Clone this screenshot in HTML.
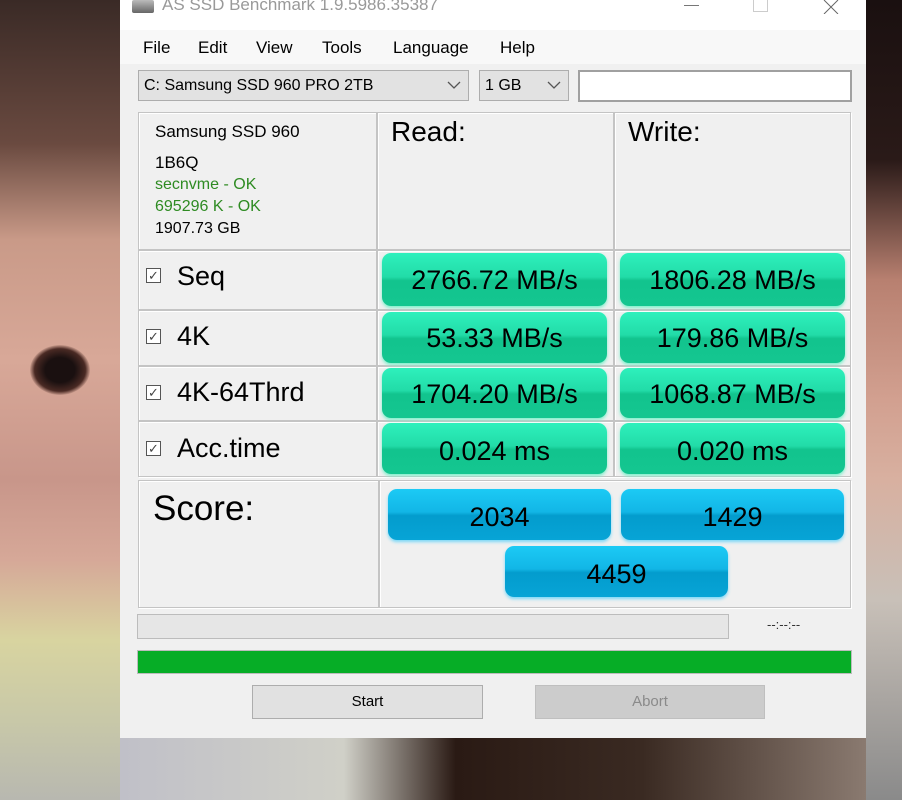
<!DOCTYPE html>
<html><head><meta charset="utf-8"><style>
*{margin:0;padding:0;box-sizing:border-box}
body{width:902px;height:800px;overflow:hidden;position:relative;font-family:"Liberation Sans",Arial,sans-serif;background:#b98c80}
.a{position:absolute}
.cell{position:absolute;border:1px solid #c4c4c4;box-shadow:inset 1px 1px 0 #fff,1px 1px 0 #fff;background:#f0f0f0}
.g{position:absolute;border-radius:9px;background:linear-gradient(#2ef0bc 0%,#22dca8 45%,#12c48e 52%,#14c690 100%);box-shadow:0 2px 3px #7ef0cc;font-size:27px;color:#000;text-align:center;line-height:54px}
.b{position:absolute;border-radius:9px;background:linear-gradient(#1ccaf5 0%,#12b6e6 45%,#039ccd 52%,#07a4d6 100%);box-shadow:0 2px 3px #7ad8f8;font-size:27px;color:#000;text-align:center;line-height:56px}
.lbl{position:absolute;font-size:27px;color:#000}
.cb{position:absolute;width:15px;height:15px;border:1px solid #555;background:#fff;font-size:13px;line-height:13px;text-align:center;color:#444}
.menu span{position:absolute;top:38px;font-size:17px;color:#000}
</style></head><body>
<!-- background photo approximation -->
<div class="a" style="left:0;top:0;width:120px;height:800px;background:linear-gradient(180deg,#3a2a26 0%,#6a4a40 18%,#c99a88 30%,#d8a898 45%,#c8968a 60%,#d6a898 70%,#d8d4a0 80%,#c8c8a8 90%,#b8b8b0 100%)"></div>
<div class="a" style="left:30px;top:345px;width:60px;height:50px;border-radius:50%;background:radial-gradient(#1a1010 35%,#4a2a24 60%,rgba(200,150,130,0) 72%)"></div>
<div class="a" style="left:866px;top:0;width:36px;height:800px;background:linear-gradient(180deg,#1a1010 0%,#2a1a18 20%,#b88070 35%,#d2a090 50%,#d8b0a0 60%,#c8c0b8 75%,#8a8a8a 100%)"></div>
<div class="a" style="left:120px;top:738px;width:746px;height:62px;background:linear-gradient(90deg,#c0c0c8 0%,#d0d0c8 30%,#2a1a14 45%,#3a2a22 70%,#8a7a70 100%)"></div>
<!-- window -->
<div class="a" style="left:120px;top:0;width:746px;height:738px;background:#f0f0f0"></div>
<div class="a" style="left:120px;top:0;width:746px;height:30px;background:#fff"></div>
<div class="a" style="left:132px;top:0;width:22px;height:13px;background:linear-gradient(#bbb,#666);border-radius:2px"></div>
<div class="a" style="left:162px;top:-5px;font-size:17px;color:#999">AS SSD Benchmark 1.9.5986.35387</div>
<div class="a" style="left:684px;top:5px;width:15px;height:1px;background:#777"></div>
<div class="a" style="left:753px;top:0;width:15px;height:12px;border:1px solid #ccc;border-top:none"></div>
<svg class="a" style="left:822px;top:0" width="18" height="14"><path d="M2 0L16 14M16 0L2 14" stroke="#666" stroke-width="1"/></svg>
<div class="a" style="left:120px;top:30px;width:746px;height:34px;background:#f8f8f8"></div>
<div class="menu"><span style="left:143px">File</span><span style="left:198px">Edit</span><span style="left:256px">View</span><span style="left:322px">Tools</span><span style="left:393px">Language</span><span style="left:500px">Help</span></div>
<!-- combos -->
<div class="a" style="left:138px;top:70px;width:331px;height:31px;background:#e2e2e2;border:1px solid #adadad;font-size:16px;padding:6px 0 0 5px">C: Samsung SSD 960 PRO 2TB</div>
<svg class="a" style="left:447px;top:80px" width="14" height="10"><path d="M1 2L7 8L13 2" fill="none" stroke="#555" stroke-width="1.3"/></svg>
<div class="a" style="left:479px;top:70px;width:90px;height:31px;background:#e2e2e2;border:1px solid #adadad;font-size:16px;padding:6px 0 0 5px">1 GB</div>
<svg class="a" style="left:547px;top:80px" width="14" height="10"><path d="M1 2L7 8L13 2" fill="none" stroke="#555" stroke-width="1.3"/></svg>
<div class="a" style="left:578px;top:70px;width:274px;height:32px;background:#fff;border:2px solid #a0a0a0"></div>
<!-- table -->
<div class="cell" style="left:138px;top:112px;width:239px;height:138px"></div>
<div class="cell" style="left:377px;top:112px;width:237px;height:138px"></div>
<div class="cell" style="left:614px;top:112px;width:237px;height:138px"></div>
<div class="a" style="left:155px;top:122px;font-size:17px">Samsung SSD 960</div>
<div class="a" style="left:155px;top:153px;font-size:17px">1B6Q</div>
<div class="a" style="left:155px;top:176px;font-size:16px;color:#2e8b22">secnvme - OK</div>
<div class="a" style="left:155px;top:198px;font-size:16px;color:#2e8b22">695296 K - OK</div>
<div class="a" style="left:155px;top:220px;font-size:16px">1907.73 GB</div>
<div class="a" style="left:391px;top:116px;font-size:28px">Read:</div>
<div class="a" style="left:628px;top:116px;font-size:28px">Write:</div>

<div class="cell" style="left:138px;top:250px;width:239px;height:60px"></div>
<div class="cell" style="left:377px;top:250px;width:237px;height:60px"></div>
<div class="cell" style="left:614px;top:250px;width:237px;height:60px"></div>
<div class="cell" style="left:138px;top:310px;width:239px;height:56px"></div>
<div class="cell" style="left:377px;top:310px;width:237px;height:56px"></div>
<div class="cell" style="left:614px;top:310px;width:237px;height:56px"></div>
<div class="cell" style="left:138px;top:366px;width:239px;height:55px"></div>
<div class="cell" style="left:377px;top:366px;width:237px;height:55px"></div>
<div class="cell" style="left:614px;top:366px;width:237px;height:55px"></div>
<div class="cell" style="left:138px;top:421px;width:239px;height:56px"></div>
<div class="cell" style="left:377px;top:421px;width:237px;height:56px"></div>
<div class="cell" style="left:614px;top:421px;width:237px;height:56px"></div>

<div class="cb" style="left:146px;top:268px">✓</div><div class="lbl" style="left:177px;top:261px">Seq</div>
<div class="cb" style="left:146px;top:329px">✓</div><div class="lbl" style="left:177px;top:321px">4K</div>
<div class="cb" style="left:146px;top:385px">✓</div><div class="lbl" style="left:177px;top:377px">4K-64Thrd</div>
<div class="cb" style="left:146px;top:441px">✓</div><div class="lbl" style="left:177px;top:433px">Acc.time</div>

<div class="g" style="left:382px;top:253px;width:225px;height:53px">2766.72 MB/s</div>
<div class="g" style="left:620px;top:253px;width:225px;height:53px">1806.28 MB/s</div>
<div class="g" style="left:382px;top:312px;width:225px;height:51px;line-height:52px">53.33 MB/s</div>
<div class="g" style="left:620px;top:312px;width:225px;height:51px;line-height:52px">179.86 MB/s</div>
<div class="g" style="left:382px;top:368px;width:225px;height:50px;line-height:52px">1704.20 MB/s</div>
<div class="g" style="left:620px;top:368px;width:225px;height:50px;line-height:52px">1068.87 MB/s</div>
<div class="g" style="left:382px;top:423px;width:225px;height:51px;line-height:56px">0.024 ms</div>
<div class="g" style="left:620px;top:423px;width:225px;height:51px;line-height:56px">0.020 ms</div>

<div class="cell" style="left:138px;top:480px;width:241px;height:128px"></div>
<div class="cell" style="left:379px;top:480px;width:472px;height:128px"></div>
<div class="a" style="left:153px;top:489px;font-size:35px">Score:</div>
<div class="b" style="left:388px;top:489px;width:223px;height:51px">2034</div>
<div class="b" style="left:621px;top:489px;width:223px;height:51px">1429</div>
<div class="b" style="left:505px;top:546px;width:223px;height:51px">4459</div>

<div class="a" style="left:137px;top:614px;width:592px;height:25px;background:#e6e6e6;border:1px solid #bcbcbc"></div>
<div class="a" style="left:767px;top:617px;font-size:13px;color:#333">--:--:--</div>
<div class="a" style="left:137px;top:650px;width:715px;height:24px;background:#06ad26;border:1px solid #bcbcbc"></div>
<div class="a" style="left:252px;top:685px;width:231px;height:34px;background:#e1e1e1;border:1px solid #adadad;font-size:15px;text-align:center;line-height:32px">Start</div>
<div class="a" style="left:535px;top:685px;width:230px;height:34px;background:#cccccc;border:1px solid #bfbfbf;font-size:15px;text-align:center;line-height:32px;color:#8a8a8a">Abort</div>
</body></html>
